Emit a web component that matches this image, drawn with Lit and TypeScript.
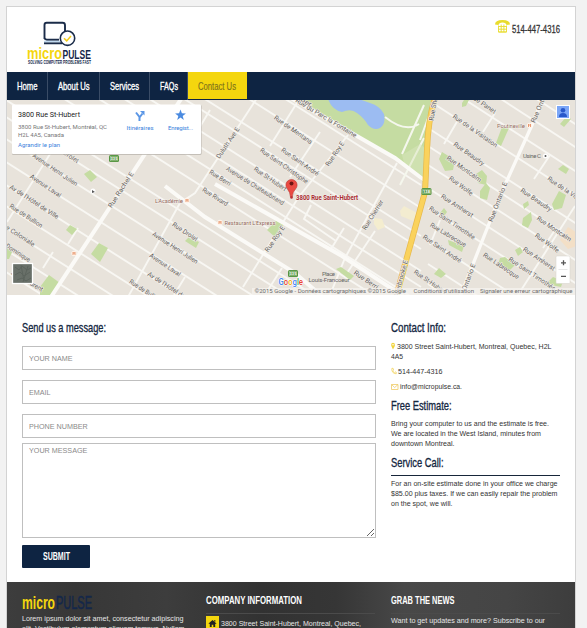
import { LitElement, html, svg, css } from "lit";
import { customElement } from "lit/decorators.js";

// One line of text set to a given width: text, width, line height, baseline, size, class
const line = (s: string, w: number, h: number, base: number, size: number, cls: string) => html`
  <svg class="line" width=${w} height=${h}>
    <text class=${cls} x="0" y=${base} font-size=${size} textLength=${w} lengthAdjust="spacingAndGlyphs">${s}</text>
  </svg>`;

type Label = [string, number, number, number, number];

// text, centre x, centre y, length, angle
const streets: Label[] = [
  ["Avenue Henri Julien", 55, 170, 53, 34], ["Avenue Laval", 45.5, 186, 36, 34],
  ["Av de l'Hôtel de Ville", 34, 202, 57, 33], ["Rue de Bullion", 26, 216, 38, 33],
  ["Rue Coloniale", 17, 234, 41, 33], ["Dominique", 18, 253, 28, 33],
  ["Saint Laurent", 27, 281, 36, 30], ["Rue Drolet", 185, 232, 29, 34], ["Drolet", 71, 157, 17, 34],
  ["Avenue Henri Julien", 175, 248, 53, 33], ["Avenue Laval", 165, 265, 36, 34],
  ["Av de l'Hôtel de Ville", 172, 289, 57, 33], ["Rue de Bullion", 145, 291, 36, 33],
  ["Rue Rivard", 215, 197, 29, 32], ["Rue Berri", 220, 178, 24, 32],
  ["Avenue de Chateaubriand", 255, 186, 67, 32], ["Rue St-Hubert", 270, 179, 38, 34],
  ["Rue Saint-Christophe", 284, 166, 57, 35], ["Rue Saint-André", 300, 162, 44, 35],
  ["Rue de Mentana", 293, 130, 45, 35], ["Rue du Parc la Fontaine", 326, 118, 70, 31],
  ["Rue Berri", 366, 280, 28, 34], ["Rue Panet", 483, 104, 30, 34],
  ["Rue de la Visitation", 475, 131, 53, 35], ["Rue Beaudry", 469, 154, 36, 35],
  ["Rue Montcalm", 464, 169, 41, 35], ["Rue Wolfe", 461, 186, 28, 37],
  ["Rue Amherst", 457, 206, 37, 33], ["Rue Saint Timothée", 452, 223, 54, 34],
  ["Rue Labrecque", 448, 235, 41, 31], ["Rue Saint André", 442, 249, 45, 34],
  ["Rue St-Hubert", 430, 282, 38, 34], ["Rue Labrecque", 501, 266, 42, 34],
  ["Rue Saint Timothée", 532, 274, 55, 34], ["Rue Amherst", 539, 259, 37, 34],
  ["Rue Wolfe", 547, 243, 28, 36], ["Rue Montcalm", 554, 229, 40, 34],
  ["Rue Beaudry", 536, 200, 36, 34], ["Rue de la Visitation", 570, 193, 53, 34],
  ["Rue Ber", 300, 98, 26, 33],
  ["Rue Rachel E", 121, 190, 41, -57], ["Duluth Ave E", 228, 143, 36, -56],
  ["Rue Roy E", 335, 154, 28, -56], ["Rue Roy E", 275, 239, 30, -55],
  ["Rue Cherrier", 373, 215, 34, -58], ["Rue Ontario E", 498, 202, 42, -69],
  ["Ontario E", 469, 277, 28, -70], ["Rue Ontario", 540, 106, 36, -67],
];

const left = [-125, -100, -78, -55, -27, -14, 8, 24, 40, 62, 100, 117, 139, 162, 185, 206, 228, 250, 272];
const right = [-245, -222, -198, -174, -146, -128, -109, -86, -66, -34, -10, 10];
const parks = [
  "M84 174l6-4 7 7-6 5z", "M66 230l4-5 7 4-5 6z", "M91 254l8-11 9 5-8 14z", "M40 287l9-12 11 8-7 12h-13z",
  "M185 241l4-4 10 5-3 6z", "M267 230l12-12 6 5-10 14z", "M336 269l5-2 13 9-4 4z", "M7 248l6 2-4 9h-2z",
  "M496 143l6-16 7 1-8 18z", "M439 159l3-7 13 8-2 10-8 1z", "M476 174l6-4 5 6-1 9-8-2z", "M480 191l6-8 4 5-3 12-7-2z",
  "M440 213l4-5 3 4-3 4z", "M448 240l16 6-2 6-13-7z", "M434 274l5-6 7 6-5 4z", "M500 258l5-1 10 8-5 5-12-5z",
  "M515 250l5-3 3 5-5 4z", "M523 218l8-6 1 8-4 8-6-3z", "M523 204l5-3 1 4-5 4z", "M552 204l7-13 7 4-4 13-8 2z",
  "M548 282l5-5 10 4-2 6-10-2z", "M558 169l5-4 6 4-3 5z", "M560 124l7-8 4 3-7 8z", "M462 103l2-3 5 0-3 6-4 1z",
];

const roads = () => svg`
  <g class="minor">
    ${left.map((b) => svg`<path d="M-5 ${b - 7} L${b < 60 ? 421 : 400} ${b + (b < 60 ? 263 : 250)}"/>`)}
    ${right.map((b) => svg`<path d="M${b < -190 ? 450 : 428} ${b + (b < -190 ? 288 : 274)} L600 ${b + 385}"/>`)}
    <path d="M257 98L195 193 180 203 128 297M348 135L298 198 243 287M300 98L270 146M320 132L290 177 M397 163L345 258 330 295"/>
    <path d="M210 110l-15 25M67 127L45 162 7 222M78 228l-10 16M53 252l-10 16M282 268l-14 22M344 228l-13 21M311 205l-7 14 32 22M375 231l-30 45"/>
    <path d="M495 113l-12 19M550 155l-16 24M575 206l-57 89M440 220l-10 25M458 120l-14 24M555 230l-12 18M185 277l-11 18"/>
  </g>`;

@customElement("street-map")
class StreetMap extends LitElement {
  static styles = css`
    :host { display: block; height: 195px; }
    svg { display: block; font-family: Roboto, "Noto Sans", sans-serif; }
    .minor path { fill: none; stroke: #f8f7f3; stroke-width: 1.9; }
    .major { fill: none; stroke: #fbfaf7; stroke-width: 4; }
    .mid { fill: none; stroke: #fbfaf7; stroke-width: 3.3; }
    .trail { fill: none; stroke: #f5f7ed; stroke-width: 2; }
    .park { fill: #c5dca2; }
    .lake { fill: #9cbcf2; }
    .name { font-size: 6.6px; fill: #66625e; stroke: #f1eee8; stroke-width: 1.2; paint-order: stroke; text-anchor: middle; }
    .poi { font-size: 6px; fill: #946a60; stroke: #f3f0ea; stroke-width: 1; paint-order: stroke; }
    .place { font-size: 6px; fill: #666; }
    .red { font-size: 6.5px; font-weight: 700; fill: #a92b31; stroke: #f3f0ea; stroke-width: 1; paint-order: stroke; }
    .legal { font-size: 6px; fill: #6c6c6c; }
    .title { font-size: 7px; fill: #222; }
    .addr { font-size: 6px; fill: #777; }
    .link { font-size: 6px; fill: #3b82dc; }
    .google { font-size: 9px; font-weight: 500; stroke: #fff; stroke-width: 1; paint-order: stroke; }
    .shield { font-size: 4px; fill: #fff; font-weight: 700; text-anchor: middle; }
  `;
  render() {
    const badge = (x: number, y: number, s: string) => svg`
      <rect x=${x - 5} y=${y - 3.5} width="10" height="7" rx="1.5" fill="#559441"/>
      <rect x=${x - 3.7} y=${y - 2.3} width="7.4" height="4.6" fill="none" stroke="#b5d6a7" stroke-width=".5"/>
      <text class="shield" x=${x} y=${y + 1.5}>${s}</text>`;
    return html`<svg width="568" height="195" viewBox="7 100 568 195">
      <rect x="7" y="100" width="568" height="195" fill="#e8e3db"/>
      ${roads()}
      <path class="park" d="M297 98H434L426 165 425 184 404 164 296 101z"/>
      <path class="lake" d="M328 99Q332 110 342 112 351 108 357 113 364 118 368 125 374 131 380 128 386 124 384 114 380 106 370 103L356 98z"/>
      <path class="trail" d="M385 117Q405 133 419 124M424 105L402 154M424 138L400 185M431 110L420 140"/>
      <path d="M402 155l18-11 5 4 0 30-21-15z" fill="#d9e6be" opacity=".5"/>
      ${parks.map((d) => svg`<path class="park" d=${d}/>`)}
      <path d="M400 211l4-5 13 7-4 8-12-5z" fill="#f3ecd0"/>
      <path d="M560 240l8-13 8 5v14l-8 3z" fill="#f3dfc6"/>
      <path d="M374 218l8 1 3 8-7 3-4-6z" fill="#f4edcf"/>
      <path class="major" d="M183 96L51 297M284 94L395 158 424 180"/>
      <path class="major" d="M165 186L205 217 295 273 324 298M215 184L342 256 403 296"/>
      <path class="mid" d="M543 98L532 125 500 196 460 297"/>
      <path d="M435 98Q428 120 427 150L425 192 396 297" fill="none" stroke="#e7b94b" stroke-width="6"/>
      <path d="M435 98Q428 120 427 150L425 192 396 297" fill="none" stroke="#fad25c" stroke-width="4.6"/>
      ${streets.map(([s, x, y, l, a]) => svg`<text class="name" x=${x} y=${y + 2} textLength=${l} lengthAdjust="spacingAndGlyphs" transform="rotate(${a} ${x} ${y})">${s}</text>`)}
      <text class="name" x="434" y="108" transform="rotate(-80 434 106)">Rue Sherb</text>
      <text class="name" x="401" y="281" transform="rotate(-75 401 279)">Sherbrooke E</text>
      ${badge(114, 158.5, "335")}${badge(426.5, 191.5, "138")}${badge(293, 273.5, "335")}
      <text class="poi" x="155" y="202.5" textLength="28">L'Académie</text>
      <text class="poi" x="224.5" y="225" textLength="51">Restaurant L'Express</text>
      <text class="poi" x="497" y="127.5" textLength="28">Poutineville</text>
      <text class="place" x="523" y="158" textLength="18">Usine C</text>
      ${[[187, 200.5], [220, 222.5], [529.5, 125.5], [74, 253.5]].map(([x, y]) => svg`<circle cx=${x} cy=${y} r="2.7" fill="#fff3e9"/><path d="M${x - 1} ${y - 1.5}v3M${x + 1} ${y - 1.5}v3M${x - 1} ${y - 0.5}h2" stroke="#df7b4b" stroke-width=".7"/>`)}
      <circle cx="545.5" cy="156" r="2.5" fill="#fff"/><circle cx="545.5" cy="156" r="1" fill="#555"/>
      <circle cx="93" cy="191" r="2.5" fill="#fff"/><path d="M92 190l3 2-3 1z" fill="#555"/>
      <text class="place" x="322" y="276.3" textLength="13">Place</text>
      <text class="place" x="308.5" y="282.3" textLength="41">Louis-Francoeur</text>
      <path d="M290.5 197Q290 192 287.5 189A5.6 5.6 0 1 1 295.5 189Q292.5 192 292.3 197z" fill="#ea4b43" stroke="#b93832" stroke-width=".6"/>
      <circle cx="291.5" cy="183.5" r="2" fill="#6d1411"/><circle cx="291.5" cy="197.5" r="1.3" fill="#b93034"/>
      <text class="red" x="296" y="199.5" textLength="62" lengthAdjust="spacingAndGlyphs">3800 Rue Saint-Hubert</text>
      <rect x="252" y="288" width="323" height="7" fill="#f5f3ef" opacity=".75"/>
      <text class="google" x="278.5" y="285" textLength="24.5" lengthAdjust="spacingAndGlyphs"><tspan fill="#4285f4">G</tspan><tspan fill="#ea4335">o</tspan><tspan fill="#f4b400">o</tspan><tspan fill="#4285f4">g</tspan><tspan fill="#34a853">l</tspan><tspan fill="#ea4335">e</tspan></text>
      <text class="legal" x="254.5" y="293" textLength="151.5">©2015 Google - Données cartographiques ©2015 Google</text>
      <text class="legal" x="413.5" y="293" textLength="60.5">Conditions d'utilisation</text>
      <text class="legal" x="480" y="293" textLength="92.5">Signaler une erreur cartographique</text>
      <rect x="12.5" y="263.5" width="20" height="20" fill="#697069" stroke="#fff" stroke-width="1.3"/>
      <path d="M15 267l4 3 3-4 5 4 4-2M15 275l5-3 4 4 6-4M17 280l5-2 4 3 5-3M21 265l3 16M28 266l-5 16" fill="none" stroke="#5c645d" stroke-width="1"/>
      <rect x="12" y="105" width="189.5" height="49.8" rx="1" fill="#b8b4ad"/>
      <rect x="12" y="104.5" width="189" height="49.5" rx="1" fill="#fff"/>
      <text class="title" x="18" y="117" textLength="62" lengthAdjust="spacingAndGlyphs">3800 Rue St-Hubert</text>
      <text class="addr" x="18" y="128.5" textLength="89">3800 Rue St-Hubert, Montréal, QC</text>
      <text class="addr" x="18" y="136.5" textLength="46">H2L 4A5, Canada</text>
      <text class="link" x="18" y="147.2" textLength="42">Agrandir le plan</text>
      <text class="link" x="126.5" y="130.3" textLength="27">Itinéraires</text>
      <text class="link" x="168" y="130.3" textLength="25">Enregist...</text>
      <path d="M139.500 121V117L136 112.500M139.500 117.500L142.500 113.500" fill="none" stroke="#5a96e6" stroke-width="2"/>
      <path d="M140 111H144.500V115.500z" fill="#5a96e6"/>
      <path d="M180.5 109.500l1.400 3.800 4 .2-3.200 2.500 1.100 3.900-3.300-2.300-3.300 2.300 1.100-3.900-3.200-2.500 4-.2z" fill="#4b8be0"/>
      <rect x="556.5" y="105.5" width="13" height="13" fill="#7ba6f7" stroke="#fff"/>
      <circle cx="563" cy="110.3" r="2.3" fill="#2758ca"/><path d="M559 117q0-4 4-4t4 4z" fill="#2758ca"/>
      <rect x="556" y="256" width="14" height="27.5" rx="1" fill="#fff" stroke="#d4d0c8" stroke-width=".5"/>
      <path d="M558.5 269.5h9" stroke="#ddd" stroke-width=".7"/>
      <path d="M561 262.800h5M563.5 260.300v5M561 276.300h5" stroke="#555" stroke-width="1.3"/>
    </svg>`;
  }
}

@customElement("app-root")
class AppRoot extends LitElement {
  static styles = css`
    :host { display: block; height: 628px; overflow: hidden; background: #f2f2f2; box-sizing: border-box; padding: 6px 11px 0 6px; font-family: "Liberation Sans", Arial, sans-serif; }
    .page { background: #fff; border: 1px solid #d3d3d3; border-bottom: 0; width: 568px; height: 640px; }
    .line { display: block; overflow: visible; flex: none; }
    .navt { fill: #fff; stroke: #fff; stroke-width: .35; }
    .active { fill: #7d721d; stroke: #7d721d; stroke-width: .15; }
    .h { fill: #14273f; stroke: #14273f; stroke-width: .35; }
    .dark { fill: #333; stroke: #333; stroke-width: .3; }
    .body { fill: #333; }
    .bold { font-weight: 700; }
    .white { fill: #fff; }
    .pale { fill: #e6e6e6; }
    .yellow { fill: #f4d60e; }
    .navy { fill: #14274a; }
    .brand .navy { stroke: #14274a; stroke-width: .5; }
    header { display: flex; justify-content: space-between; height: 65px; }
    .logo { display: block; margin: 14px 0 0 19px; }
    .call { display: flex; gap: 3px; padding: 13px 15px 0 0; }
    .call .ic { width: 15px; height: 13px; margin-right: -1px; }
    nav { display: flex; height: 28px; background: #0e2442; }
    nav div { box-sizing: border-box; border-right: 1px solid #3a4c66; padding-left: 10px; height: 28px; }
    .n0 { width: 41px; } .n1 { width: 52px; } .n2 { width: 50px; } .n3 { width: 38px; }
    nav .n4 { width: 59px; height: 27px; background: #f4d60e; border: 0; }
    main { display: flex; justify-content: space-between; height: 287px; box-sizing: border-box; padding: 20px 15px 0; }
    .form { width: 354px; }
    .form input, .form textarea { display: block; box-sizing: border-box; width: 354px; border: 1px solid #bfbfbf; border-radius: 0; margin: 0 0 10px; padding: 1px 6px; height: 24px; font: 7.2px "Liberation Sans", Arial, sans-serif; outline: 0; background: #fff; color: #333; }
    .form textarea { height: 95px; margin: -5px 0 7px; padding: 2px 6px; }
    .form ::placeholder { color: #8a8a8a; opacity: 1; }
    button { display: flex; justify-content: center; border: 0; padding: 0; width: 68px; height: 23px; background: #0e2442; border-radius: 1px; }
    .info { width: 169px; }
    .row { display: flex; }
    .addr, .tel, .mail { padding-top: 5px; }
    .ic { display: block; flex: none; }
    .sub { padding-top: 1px; }
    .rule { height: 1px; background: #17263a; margin: 0 0 2px; }
    footer { display: flex; height: 60px; background: linear-gradient(90deg, #3d3d3d 0, #373737 12%, #3d3d3d 28%, #323232 45%, #363636 58%, #484848 70%, #454545 88%, #3d3d3d); padding-left: 15px; }
    .c1 { width: 184px; } .c2 { width: 185px; } .c3 { width: 169px; }
    .c2, .c3 { padding-top: 11px; }
    .brand { display: flex; gap: 1px; padding-top: 8px; }
    .sep { height: 1px; background: #4b4b4b; width: 169px; margin: 7px 0 2px; }
    .box { width: 13px; height: 15px; background: #f4d60e; margin-right: 2px; }
  `;
  render() {
    const nav: [string, number][] = [["Home", 20.5], ["About Us", 31.5], ["Services", 29], ["FAQs", 18], ["Contact Us", 38]];
    const body = (s: string, w: number) => line(s, w, 10, 8, 7.5, "body");
    return html`<div class="page">
      <header>
        <svg class="logo" width="68" height="46" viewBox="26 21 68 46">
          <path d="M44.500 39V25Q44.500 22.800 46.700 22.800H62.500Q65 22.800 65 25.200V31M44.500 37.500Q44.700 39.500 47 39.800H59M44 43.300H62" fill="none" stroke="#1b2c49" stroke-width="1.900"/>
          <path d="M44 41.500h16" stroke="#c1daf0" stroke-width="1.500"/>
          <circle cx="67.500" cy="38.200" r="7.200" fill="#fff" stroke="#1b2c49" stroke-width="1.600"/>
          <path d="M64 38.300l2.700 2.600 4.300-5" fill="none" stroke="#f4cd18" stroke-width="1.500"/>
          <text class="yellow bold" x="27" y="58.700" font-size="16.500" textLength="35" lengthAdjust="spacingAndGlyphs">micro</text>
          <text class="navy bold" x="62.500" y="58.700" font-size="13.500" textLength="28.500" lengthAdjust="spacingAndGlyphs">PULSE</text>
          <text class="navy bold" x="28" y="64.200" font-size="4.800" textLength="63" lengthAdjust="spacingAndGlyphs">SOLVING COMPUTER PROBLEMS FAST</text>
        </svg>
        <div class="call">
          <svg class="ic" viewBox="0 0 15 13"><path d="M0 4.500Q0 0 7.500 0T15 4.500L11.500 5Q11 2.500 7.500 2.500T3.500 5z" fill="#e9dc2d"/><path d="M3.500 5.500V12H11.500V5.500M6.200 4.500V12M8.900 4.500V12M3.500 6.500h8M3.500 9.200h8M3.500 12h8" fill="none" stroke="#e9dc2d" stroke-width=".9"/></svg>
          ${line("514-447-4316", 48, 20, 13, 11.5, "dark")}
        </div>
      </header>
      <nav>${nav.map(([s, w], i) => html`<div class="n${i}">${line(s, w, 28, 18.3, 11.5, i === 4 ? "active" : "navt")}</div>`)}</nav>
      <street-map></street-map>
      <main>
        <div class="form">
          ${line("Send us a message:", 84, 31, 17, 13.5, "h")}
          <input placeholder="YOUR NAME"><input placeholder="EMAIL"><input placeholder="PHONE NUMBER">
          <textarea placeholder="YOUR MESSAGE"></textarea>
          <button>${line("SUBMIT", 27, 23, 15, 11, "white bold")}</button>
        </div>
        <div class="info">
          ${line("Contact Info:", 55, 21, 17, 13.5, "h")}
          <div class="row addr">
            <svg class="ic" width="6" height="10"><path d="M2 8.500L.3 5Q-.3 1.800 2 1.800T3.800 5z" fill="#f2d43b"/><circle cx="2" cy="3.800" r=".8" fill="#fff"/></svg>
            ${body("3800 Street Saint-Hubert, Montreal, Quebec, H2L", 154.5)}
          </div>
          ${body("4A5", 12)}
          <div class="row tel">
            <svg class="ic" width="7" height="10"><path d="M.8 2.500Q.6 7.500 5.200 7.800L5.400 6.500 4 5.800 3.300 6.500Q2 5.500 2 4.300L2.600 3.800 2 2.200z" fill="none" stroke="#f0cf4a" stroke-width=".7"/></svg>
            ${body("514-447-4316", 44.5)}
          </div>
          <div class="row mail">
            <svg class="ic" width="9" height="10"><path d="M.5 3.500h6.500v5H.5zL3.700 6.500 7 3.500" fill="none" stroke="#efcb68" stroke-width=".8"/></svg>
            ${body("info@micropulse.ca.", 62)}
          </div>
          ${line("Free Estimate:", 60.5, 26, 19, 13.5, "h")}
          <div class="sub">
            ${body("Bring your computer to us and the estimate is free.", 158)}
            ${body("We are located in the West Island, minutes from", 150)}
            ${body("downtown Montreal.", 63.5)}
          </div>
          ${line("Service Call:", 52.5, 27, 19, 13.5, "h")}
          <div class="rule"></div>
          ${body("For an on-site estimate done in your office we charge", 166.5)}
          ${body("$85.00 plus taxes. If we can easily repair the problem", 166.5)}
          ${body("on the spot, we will.", 61.5)}
        </div>
      </main>
      <footer>
        <div class="c1">
          <div class="brand">${line("micro", 33, 23, 18.5, 18.5, "yellow bold")}${line("PULSE", 36, 23, 18.5, 18, "navy")}</div>
          ${line("Lorem ipsum dolor sit amet, consectetur adipiscing", 161.5, 10, 8, 7.5, "pale")}
          ${line("elit. Vestibulum elementum aliquam tempus. Nullam", 162.5, 10, 8, 7.5, "pale")}
        </div>
        <div class="c2">
          ${line("COMPANY INFORMATION", 96, 13, 11, 11.5, "white bold")}
          <div class="sep"></div>
          <div class="row">
            <svg class="box" viewBox="0 0 13 15"><path d="M2.500 7.500L6.500 4l4 3.500-.7.500-.6-.4V11H7.300V8.800H5.700V11H3.800V7.600l-.6.400zM8.300 4h1v2l-1-.7z" fill="#222"/></svg>
            ${line("3800 Street Saint-Hubert, Montreal, Quebec,", 140, 13, 9.5, 7.5, "pale")}
          </div>
        </div>
        <div class="c3">
          ${line("GRAB THE NEWS", 63.5, 13, 11, 11.5, "white bold")}
          <div class="sep"></div>
          ${line("Want to get updates and more? Subscribe to our", 154, 12, 7, 7.5, "pale")}
        </div>
      </footer>
    </div>`;
  }
}
